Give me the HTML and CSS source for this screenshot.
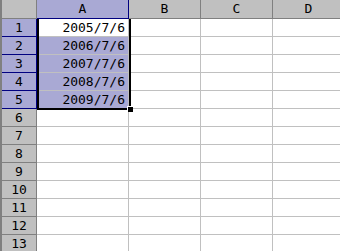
FILE: index.html
```html
<!DOCTYPE html>
<html lang="ja">

<head>
  <meta charset="UTF-8">
  <title>Sheet1</title>
  <link rel="stylesheet" href="styles.css">
</head>

<body>
  <div class="sheet">
    <div class="hd corner"></div>
    <div class="hd col sel">A</div>
    <div class="hd col">B</div>
    <div class="hd col">C</div>
    <div class="hd col">D</div>

    <div class="hd row sel">1</div>
    <div class="cell num">2005/7/6</div>
    <div class="cell"></div><div class="cell"></div><div class="cell"></div>

    <div class="hd row sel">2</div>
    <div class="cell num on">2006/7/6</div>
    <div class="cell"></div><div class="cell"></div><div class="cell"></div>

    <div class="hd row sel">3</div>
    <div class="cell num on">2007/7/6</div>
    <div class="cell"></div><div class="cell"></div><div class="cell"></div>

    <div class="hd row sel">4</div>
    <div class="cell num on">2008/7/6</div>
    <div class="cell"></div><div class="cell"></div><div class="cell"></div>

    <div class="hd row sel">5</div>
    <div class="cell num on">2009/7/6</div>
    <div class="cell"></div><div class="cell"></div><div class="cell"></div>

    <div class="hd row">6</div>
    <div class="cell"></div><div class="cell"></div><div class="cell"></div><div class="cell"></div>
    <div class="hd row">7</div>
    <div class="cell"></div><div class="cell"></div><div class="cell"></div><div class="cell"></div>
    <div class="hd row">8</div>
    <div class="cell"></div><div class="cell"></div><div class="cell"></div><div class="cell"></div>
    <div class="hd row">9</div>
    <div class="cell"></div><div class="cell"></div><div class="cell"></div><div class="cell"></div>
    <div class="hd row">10</div>
    <div class="cell"></div><div class="cell"></div><div class="cell"></div><div class="cell"></div>
    <div class="hd row">11</div>
    <div class="cell"></div><div class="cell"></div><div class="cell"></div><div class="cell"></div>
    <div class="hd row">12</div>
    <div class="cell"></div><div class="cell"></div><div class="cell"></div><div class="cell"></div>
    <div class="hd row">13</div>
    <div class="cell"></div><div class="cell"></div><div class="cell"></div><div class="cell"></div>

    <!-- selection frame A1:A5 -->
    <div class="selection">
      <span class="handle"></span>
    </div>
  </div>
</body>

</html>
```

FILE: styles.css
```css
body {
  margin: 0;
  overflow: hidden;
  background-color: #fff;
  font-family: "DejaVu Sans Mono", monospace;
  font-size: 13px;
  color: #000;
}

.sheet {
  position: relative;
  display: grid;
  grid-template-columns: 35px 92px 72px 72px 72px;
  grid-template-rows: 19px repeat(13, 18px);
  width: max-content;
  border-left: 2px solid #808080;
}

.sheet > div {
  box-sizing: border-box;
}

.hd {
  background-color: #c0c0c0;
  border-right: 1px solid #808080;
  border-bottom: 1px solid #808080;
  text-align: center;
  line-height: 17px;
}

.hd.sel {
  background-color: #a9a9d4;
  border-color: #000080;
}

.cell {
  border-right: 1px solid #c0c0c0;
  border-bottom: 1px solid #c0c0c0;
  line-height: 17px;
}

.cell.num {
  text-align: right;
  padding-right: 3px;
}

.cell.on {
  background-color: #a9a9d4;
}

.selection {
  position: absolute;
  left: 35px;
  top: 19px;
  width: 94px;
  height: 91px;
  box-sizing: border-box;
  border: 2px solid #000;
  border-top: none;
}

.handle {
  position: absolute;
  right: -4px;
  bottom: -4px;
  width: 5px;
  height: 5px;
  background-color: #000;
  border: 1px solid #fff;
  border-right: none;
  border-bottom: none;
}
```
